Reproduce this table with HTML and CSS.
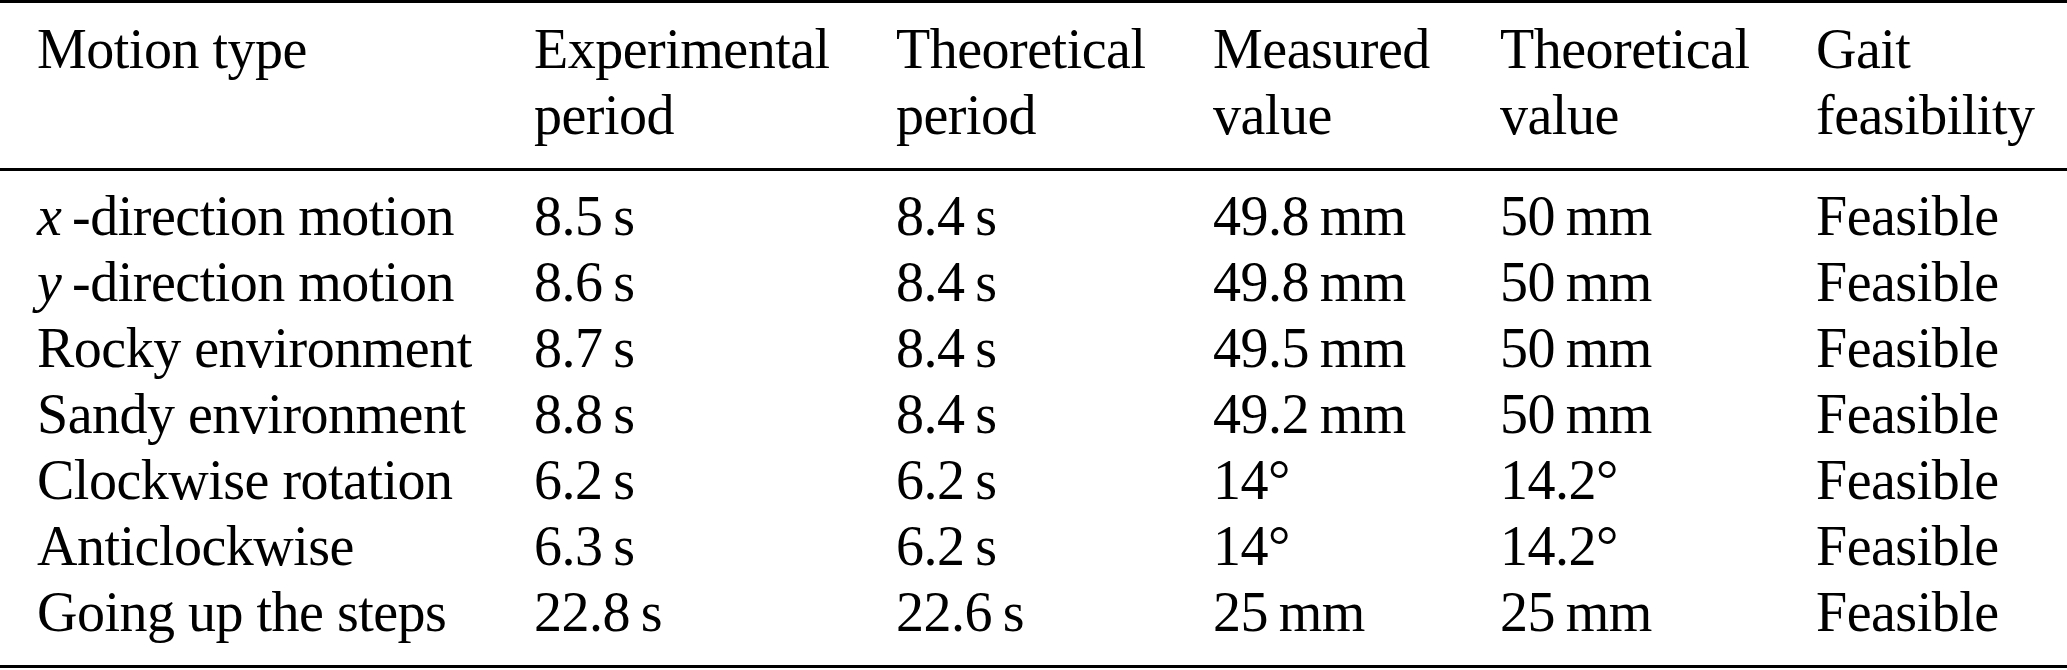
FILE: index.html
```html
<!DOCTYPE html>
<html lang="en">
<head>
<meta charset="utf-8">
<title>Motion results</title>
<link rel="stylesheet" href="styles.css">
</head>
<body>
<table class="results">
  <colgroup>
    <col class="c1"><col class="c2"><col class="c3"><col class="c4"><col class="c5"><col class="c6">
  </colgroup>
  <thead>
    <tr>
      <th class="first">Motion type</th>
      <th>Experimental<br>period</th>
      <th>Theoretical<br>period</th>
      <th>Measured<br>value</th>
      <th>Theoretical<br>value</th>
      <th>Gait<br>feasibility</th>
    </tr>
  </thead>
  <tbody>
    <tr class="top">
      <td class="first"><i>x</i>&thinsp;-direction motion</td>
      <td>8.5&thinsp;s</td><td>8.4&thinsp;s</td><td>49.8&thinsp;mm</td><td>50&thinsp;mm</td><td>Feasible</td>
    </tr>
    <tr>
      <td class="first"><i>y</i>&thinsp;-direction motion</td>
      <td>8.6&thinsp;s</td><td>8.4&thinsp;s</td><td>49.8&thinsp;mm</td><td>50&thinsp;mm</td><td>Feasible</td>
    </tr>
    <tr>
      <td class="first">Rocky environment</td>
      <td>8.7&thinsp;s</td><td>8.4&thinsp;s</td><td>49.5&thinsp;mm</td><td>50&thinsp;mm</td><td>Feasible</td>
    </tr>
    <tr>
      <td class="first">Sandy environment</td>
      <td>8.8&thinsp;s</td><td>8.4&thinsp;s</td><td>49.2&thinsp;mm</td><td>50&thinsp;mm</td><td>Feasible</td>
    </tr>
    <tr>
      <td class="first">Clockwise rotation</td>
      <td>6.2&thinsp;s</td><td>6.2&thinsp;s</td><td>14°</td><td>14.2°</td><td>Feasible</td>
    </tr>
    <tr>
      <td class="first">Anticlockwise</td>
      <td>6.3&thinsp;s</td><td>6.2&thinsp;s</td><td>14°</td><td>14.2°</td><td>Feasible</td>
    </tr>
    <tr class="bottom">
      <td class="first">Going up the steps</td>
      <td>22.8&thinsp;s</td><td>22.6&thinsp;s</td><td>25&thinsp;mm</td><td>25&thinsp;mm</td><td>Feasible</td>
    </tr>
  </tbody>
</table>
</body>
</html>
```
FILE: styles.css
```css
html, body {
  margin: 0;
  padding: 0;
  background: #fff;
}

.results {
  width: 2067px;
  table-layout: fixed;
  border-collapse: collapse;
  font-family: "Liberation Serif", "Times New Roman", serif;
  font-size: 56px;
  line-height: 66px;
  letter-spacing: -0.5px;
  color: #000;
  border-top: 3px solid #000;
  border-bottom: 3px solid #000;
}

.c1 { width: 534px; }
.c2 { width: 362px; }
.c3 { width: 317px; }
.c4 { width: 287px; }
.c5 { width: 316px; }
.c6 { width: 251px; }

.results th,
.results td {
  padding: 0;
  text-align: left;
  vertical-align: top;
  font-weight: normal;
  white-space: nowrap;
}

.results .first {
  padding-left: 37px;
}

.results thead th {
  padding-top: 13px;
  padding-bottom: 20px;
  border-bottom: 3px solid #000;
}

.results tbody tr.top td {
  padding-top: 12px;
}

.results tbody tr.bottom td {
  padding-bottom: 20px;
}
```
